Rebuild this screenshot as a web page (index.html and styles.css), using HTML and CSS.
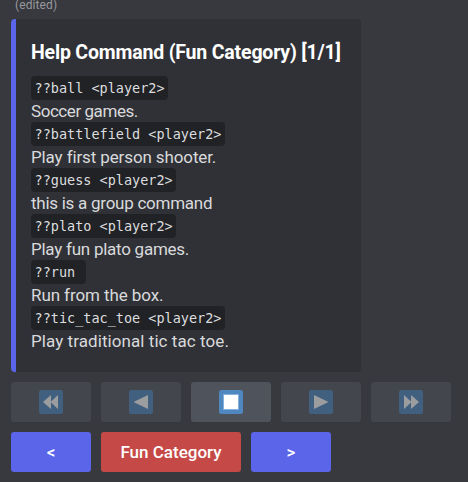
FILE: index.html
```html
<!DOCTYPE html>
<html lang="en">
<head>
<meta charset="utf-8">
<title>Help Command</title>
<link rel="stylesheet" href="styles.css">
</head>
<body>
<main class="message">
  <div class="edited">(edited)</div>
  <article class="embed">
    <h1 class="title">Help Command (Fun Category) [1/1]</h1>
    <div class="row"><code>??ball &lt;player2&gt;</code></div>
    <div class="row"><span class="soccer">Soccer games.</span></div>
    <div class="row"><code>??battlefield &lt;player2&gt;</code></div>
    <div class="row"><span class="shooter">Play first person shooter.</span></div>
    <div class="row"><code>??guess &lt;player2&gt;</code></div>
    <div class="row"><span class="group">this is a group command</span></div>
    <div class="row"><code>??plato &lt;player2&gt;</code></div>
    <div class="row"><span class="plato">Play fun plato games.</span></div>
    <div class="row"><code class="short">??run </code></div>
    <div class="row"><span class="run">Run from the box.</span></div>
    <div class="row"><code>??tic_tac_toe &lt;player2&gt;</code></div>
    <div class="row"><span class="toe">Play traditional tic tac toe.</span></div>
  </article>
  <div class="buttons">
    <button class="btn muted" aria-label="First"><svg viewBox="0 0 24 24"><rect width="24" height="24" rx="2.5" fill="#41607f"/><path d="M4 12 12 5v14zM11.500 12 19 5v14z" fill="#9c9d9f"/></svg></button>
    <button class="btn muted" aria-label="Previous"><svg viewBox="0 0 24 24"><rect width="24" height="24" rx="2.500" fill="#41607f"/><path d="M4.500 12 19 5v14z" fill="#9c9d9f"/></svg></button>
    <button class="btn stop" aria-label="Stop"><svg viewBox="0 0 24 24"><rect width="24" height="24" rx="2.500" fill="#4f87c1"/><path d="M4 4h16v16H4z" fill="#86b0dc"/><path d="M5 5h14v14H5z" fill="#fff"/></svg></button>
    <button class="btn muted" aria-label="Next"><svg viewBox="0 0 24 24"><rect width="24" height="24" rx="2.500" fill="#41607f"/><path d="M19.500 12 5 5v14z" fill="#9c9d9f"/></svg></button>
    <button class="btn muted" aria-label="Last"><svg viewBox="0 0 24 24"><rect width="24" height="24" rx="2.500" fill="#41607f"/><path d="M20 12 12 5v14zM12.500 12 5 5v14z" fill="#9c9d9f"/></svg></button>
  </div>
  <div class="buttons">
    <button class="btn primary">&lt;</button>
    <button class="btn danger">Fun Category</button>
    <button class="btn primary">&gt;</button>
  </div>
</main>
</body>
</html>
```

FILE: styles.css
```css
* { box-sizing: border-box; }
body {
  margin: 0;
  height: 482px;
  overflow: hidden;
  background: #38393e;
  font-family: Roboto, "Liberation Sans", sans-serif;
  color: #d9dadc;
}
.message { padding-left: 11px; }
.edited {
  height: 19px;
  padding-left: 4px;
  font-size: 12px;
  line-height: 11px;
  color: #96989d;
  letter-spacing: .1px;
}
.embed {
  width: 350px;
  height: 353px;
  padding: 22px 0 0 15px;
  border-left: 5px solid #5a65ea;
  border-radius: 4px;
  background: #303136;
}
.title {
  margin: 0 0 12px;
  font-size: 19.500px;
  line-height: 23px;
  font-weight: 700;
  letter-spacing: -.18px;
  color: #fff;
  white-space: nowrap;
}
.row {
  display: flex;
  align-items: center;
  height: 23px;
  font-size: 17px;
  line-height: 23px;
  white-space: pre;
}
.row span { padding-top: 2px; }
.soccer { letter-spacing: -.44px; }
.shooter { letter-spacing: -.12px; }
.group { letter-spacing: -.26px; }
.plato { letter-spacing: -.25px; }
.run { letter-spacing: -.09px; }
.toe { letter-spacing: .07px; }
code {
  height: 24px;
  margin-top: 1px;
  padding: 0 3.500px;
  border-radius: 4px;
  background: #202226;
  font: 13.500px/24px "DejaVu Sans Mono", monospace;
  color: #dcddde;
}
.short { padding-right: 2.500px; }
.buttons { display: flex; gap: 10px; margin-top: 10px; }
.btn {
  display: flex;
  align-items: center;
  justify-content: center;
  width: 80px;
  height: 40px;
  padding: 0;
  border: 0;
  border-radius: 3px;
  color: #fff;
  font: 500 17px/24px Roboto, sans-serif;
}
.btn svg { width: 24px; height: 24px; }
.muted { background: #43464c; }
.stop { background: #4f545c; }
.primary { background: #5a65ea; }
.danger { width: 140px; background: #c54946; }
```
